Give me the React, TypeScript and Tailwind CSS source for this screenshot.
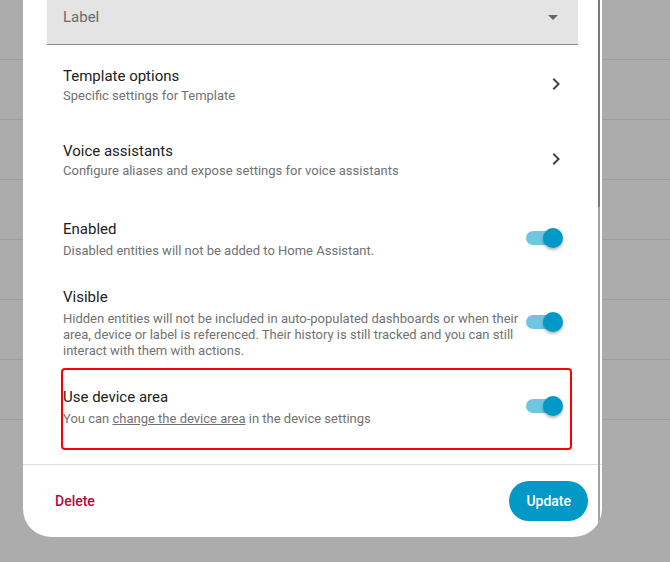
import React from "react";

const font = { fontFamily: "Roboto, 'Noto Sans', sans-serif" };

function Toggle() {
  return (
    <div className="relative h-5 w-[37px] shrink-0">
      <div className="absolute left-0 top-[3px] h-[14px] w-[32px] rounded-full bg-[#70c5e1]" />
      <div className="absolute right-0 top-0 h-5 w-5 rounded-full bg-[#0298c7] shadow-[0_2px_3px_rgba(0,0,0,0.3)]" />
    </div>
  );
}

function Chevron() {
  return (
    <svg width="24" height="24" viewBox="0 0 24 24" className="shrink-0 text-[#444]">
      <path fill="currentColor" d="M8.59,16.58L13.17,12L8.59,7.41L10,6L16,12L10,18L8.59,16.58Z" />
    </svg>
  );
}

function RowText({
  title,
  tight,
  children,
}: {
  title: string;
  tight?: boolean;
  children: React.ReactNode;
}) {
  return (
    <div className="min-w-0 flex-1">
      <div className="text-[15px] leading-6 text-[#212121]">{title}</div>
      <div className={tight ? "text-[13px] leading-4 text-[#727272]" : "mt-0.5 text-[13px] leading-4 text-[#727272]"}>
        {children}
      </div>
    </div>
  );
}

export default function App() {
  return (
    <div className="relative h-[562px] w-[670px] overflow-hidden bg-[#acacac]" style={font}>
      {/* list behind the dialog */}
      <div className="flex flex-col">
        {[0, 1, 2, 3, 4, 5, 6].map((i) => (
          <div key={i} className="h-[60px] border-b border-[#9e9e9e]" />
        ))}
      </div>

      {/* dialog */}
      <div className="absolute left-[23px] top-0 flex h-[537px] w-[579px] flex-col overflow-hidden rounded-b-[28px] bg-white">
        <div className="h-[465px] shrink-0 border-b border-[#e0e0e0] px-6">
          {/* select */}
          <div className="flex h-[45px] items-center justify-between border-b border-[#8c8c8c] bg-[#e4e4e4] pl-4 pr-[20px]">
            <span className="-mt-[10px] text-[15px] text-[#6b6b6b]">Label</span>
            <svg width="10" height="5" viewBox="0 0 10 5" className="-mt-[10px]">
              <path d="M0 0L10 0L5 5Z" fill="#666" />
            </svg>
          </div>

          <div className="mt-[19px] flex items-center pl-4 pr-[10px]">
            <RowText title="Template options" tight>
              Specific settings for Template
            </RowText>
            <Chevron />
          </div>

          <div className="mt-[35px] flex items-center pl-4 pr-[10px]">
            <RowText title="Voice assistants" tight>
              Configure aliases and expose settings for voice assistants
            </RowText>
            <Chevron />
          </div>

          <div className="mt-[38px] flex items-center gap-3 pl-4 pr-[15px]">
            <RowText title="Enabled">Disabled entities will not be added to Home Assistant.</RowText>
            <Toggle />
          </div>

          <div className="mt-[26px] flex items-center gap-1 pl-4 pr-[15px]">
            <RowText title="Visible">
              Hidden entities will not be included in auto-populated dashboards or when their
              area, device or label is referenced. Their history is still tracked and you can still
              interact with them with actions.
            </RowText>
            <Toggle />
          </div>

          <div className="ml-[14px] mr-[6px] mt-[9px] flex items-center gap-3 rounded-[4px] border-2 border-[#ff0000] pb-[21px] pl-0 pr-[7px] pt-[15px]">
            <RowText title="Use device area">
              You can <span className="underline">change the device area</span> in the device
              settings
            </RowText>
            <Toggle />
          </div>
        </div>

        {/* footer */}
        <div className="flex flex-1 items-center justify-between pl-[20px] pr-[14px]">
          <button className="rounded-full px-3 py-2 text-[14px] font-medium text-[#b3093c]">
            Delete
          </button>
          <button className="h-10 rounded-full bg-[#0299c7] px-[17px] text-[14px] font-medium text-white">
            Update
          </button>
        </div>

        {/* scrollbar */}
        <div className="absolute right-[2px] top-0 flex h-[528px] w-[2px] flex-col">
          <div className="h-[207px] bg-[#7a7a7a]" />
          <div className="flex-1 bg-[#a2a2a2]" />
        </div>
      </div>
    </div>
  );
}
